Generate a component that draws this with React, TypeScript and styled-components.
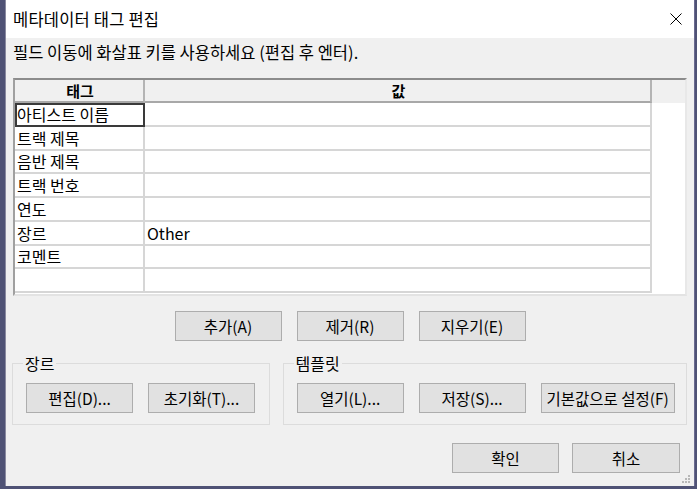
import React from "react";
import styled, { createGlobalStyle } from "styled-components";

const GlobalStyle = createGlobalStyle`
  html, body {
    margin: 0;
    padding: 0;
    width: 697px;
    height: 489px;
    overflow: hidden;
    background: #4f5275;
    font-family: "Noto Sans CJK KR", "Noto Sans", sans-serif;
  }
`;

const Desktop = styled.div`
  width: 697px;
  height: 489px;
  display: flex;
  padding-left: 5px;
  box-sizing: border-box;
`;

const Window = styled.div`
  position: relative;
  width: 690px;
  height: 486px;
  box-sizing: border-box;
  border-left: 1px solid #8a8aa0;
  border-right: 1px solid #6a6a90;
  background: #f0f0f0;
  display: flex;
  flex-direction: column;
`;

const TitleBar = styled.div`
  height: 38px;
  background: #ffffff;
  display: flex;
  align-items: center;
  justify-content: space-between;
  padding: 0 6px 0 7px;
  flex-shrink: 0;
`;

const Title = styled.span`
  font-size: 16.5px;
  color: #000;
  letter-spacing: 0.2px;
`;

const CloseButton = styled.div`
  width: 24px;
  height: 24px;
  display: flex;
  align-items: center;
  justify-content: center;
`;

const Body = styled.div`
  flex: 1;
  display: flex;
  flex-direction: column;
  padding: 0 7px 0 7px;
`;

const Hint = styled.div`
  height: 40px;
  font-size: 16.5px;
  line-height: 28px;
  color: #000;
`;

const GridFrame = styled.div`
  height: 218px;
  box-sizing: border-box;
  border-top: 2px solid #8c8c8c;
  border-left: 2px solid #a0a0a0;
  border-bottom: 2px solid #e3e3e3;
  border-right: 2px solid #e8e8e8;
  background: #ffffff;
  display: flex;
  flex-direction: column;
`;

const Row = styled.div<{ $header?: boolean }>`
  display: flex;
  height: ${(p) => (p.$header ? "23px" : "23.75px")};
  flex-shrink: 0;
  background: ${(p) => (p.$header ? "#f0f0f0" : "#ffffff")};
`;

const Cell = styled.div<{ $header?: boolean; $w: number; $focus?: boolean }>`
  width: ${(p) => p.$w}px;
  box-sizing: border-box;
  flex-shrink: 0;
  font-size: ${(p) => (p.$header ? "15px" : "16px")};
  color: #000;
  display: flex;
  align-items: center;
  padding-left: 2px;
  justify-content: ${(p) => (p.$header ? "center" : "flex-start")};
  font-weight: ${(p) => (p.$header ? 700 : 400)};
  border-right: 2px solid ${(p) => (p.$header ? "#b4b4b4" : "#d6d6d6")};
  border-bottom: 2px solid ${(p) => (p.$header ? "#a8a8a8" : "#d6d6d6")};
  outline: ${(p) => (p.$focus ? "2px solid #3a3a3a" : "none")};
  outline-offset: -2px;
`;

const Filler = styled.div<{ $header?: boolean }>`
  flex: 1;
  background: ${(p) => (p.$header ? "#f0f0f0" : "#ffffff")};
`;

const ButtonRow = styled.div<{ $justify: string; $mt: number; $gap: number; $pr?: number }>`
  display: flex;
  gap: ${(p) => p.$gap}px;
  justify-content: ${(p) => p.$justify};
  margin-top: ${(p) => p.$mt}px;
  padding-right: ${(p) => p.$pr ?? 0}px;
`;

const Button = styled.button<{ $w?: number }>`
  width: ${(p) => p.$w ?? 107}px;
  height: 30px;
  box-sizing: border-box;
  background: #e1e1e1;
  border: 1px solid #adadad;
  border-radius: 0;
  font-family: "Noto Sans CJK KR", "Noto Sans", sans-serif;
  font-size: 15.5px;
  color: #000;
  padding: 0;
  display: flex;
  align-items: center;
  justify-content: center;
`;

const GroupRow = styled.div`
  display: flex;
  gap: 13px;
  margin-top: 22px;
  margin-left: -1px;
`;

const Group = styled.fieldset<{ $w: number }>`
  width: ${(p) => p.$w}px;
  height: 70px;
  box-sizing: border-box;
  margin: -8px 0 0 0;
  border: 1px solid #dcdcdc;
  padding: 12px 0 0 13px;
  display: flex;
  gap: 15px;
`;

const Legend = styled.legend`
  font-size: 16px;
  padding: 0 2px;
  margin-left: -3px;
  line-height: 16px;
`;

const Grip = styled.svg`
  position: absolute;
  right: 3px;
  bottom: 2px;
`;

const rows = [
  ["아티스트 이름", ""],
  ["트랙 제목", ""],
  ["음반 제목", ""],
  ["트랙 번호", ""],
  ["연도", ""],
  ["장르", "Other"],
  ["코멘트", ""],
  ["", ""],
];

export default function App() {
  return (
    <>
      <GlobalStyle />
      <Desktop>
        <Window>
          <TitleBar>
            <Title>메타데이터 태그 편집</Title>
            <CloseButton>
              <svg width="12" height="12" viewBox="0 0 12 12">
                <path d="M0.5 0.5 L11.5 11.5 M11.5 0.5 L0.5 11.5" stroke="#000" strokeWidth="1" fill="none" />
              </svg>
            </CloseButton>
          </TitleBar>
          <Body>
            <Hint>필드 이동에 화살표 키를 사용하세요 (편집 후 엔터).</Hint>
            <GridFrame>
              <Row $header>
                <Cell $header $w={130}>태그</Cell>
                <Cell $header $w={507}>값</Cell>
                <Filler $header />
              </Row>
              {rows.map(([tag, value], i) => (
                <Row key={i}>
                  <Cell $w={130} $focus={i === 0}>{tag}</Cell>
                  <Cell $w={507}>{value}</Cell>
                  <Filler />
                </Row>
              ))}
            </GridFrame>
            <ButtonRow $justify="center" $mt={15} $gap={15}>
              <Button>추가(A)</Button>
              <Button>제거(R)</Button>
              <Button>지우기(E)</Button>
            </ButtonRow>
            <GroupRow>
              <Group $w={258}>
                <Legend>장르</Legend>
                <Button>편집(D)...</Button>
                <Button>초기화(T)...</Button>
              </Group>
              <Group $w={405}>
                <Legend>템플릿</Legend>
                <Button>열기(L)...</Button>
                <Button>저장(S)...</Button>
                <Button $w={134}>기본값으로 설정(F)</Button>
              </Group>
            </GroupRow>
            <ButtonRow $justify="flex-end" $mt={18} $gap={13} $pr={7}>
              <Button>확인</Button>
              <Button $w={108}>취소</Button>
            </ButtonRow>
          </Body>
          <Grip width="10" height="10" viewBox="0 0 10 10">
            {[
              [8, 2],
              [5, 5],
              [8, 5],
              [2, 8],
              [5, 8],
              [8, 8],
            ].map(([x, y]) => (
              <rect key={`${x}-${y}`} x={x - 1} y={y - 1} width="2" height="2" fill="#b8b8b8" />
            ))}
          </Grip>
        </Window>
      </Desktop>
    </>
  );
}
